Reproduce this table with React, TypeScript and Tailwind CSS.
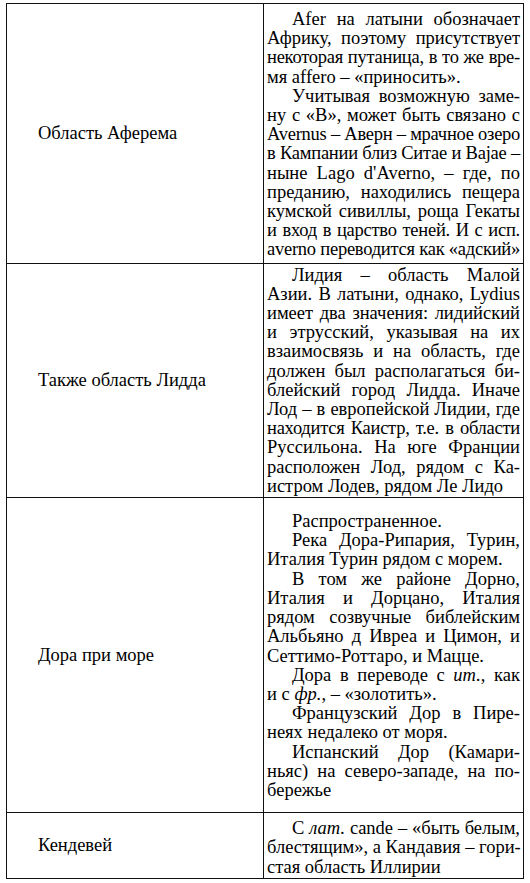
import React from "react";

type L = { t: React.ReactNode; j?: boolean; i?: boolean; n?: boolean };

const Line = ({ l }: { l: L }) => (
  <div
    className={
      "whitespace-nowrap " +
      (l.j ? "text-justify [text-align-last:justify] " : "text-left ") +
      (l.i ? "pl-[25px] " : "") +
      (l.n ? "tracking-[-0.25px]" : "")
    }
  >
    {l.t}
  </div>
);

const row1: L[] = [
  { t: "Afer на латыни обозначает", j: true, i: true },
  { t: "Африку, поэтому присутствует", j: true },
  { t: "некоторая путаница, в то же вре-", j: true, n: true },
  { t: "мя affero – «приносить»." },
  { t: "Учитывая возможную заме-", j: true, i: true },
  { t: "ну с «В», может быть связано с", j: true },
  { t: "Avernus – Аверн – мрачное озеро", j: true, n: true },
  { t: "в Кампании близ Ситае и Bajae –", j: true, n: true },
  { t: "ныне Lago d'Averno, – где, по", j: true },
  { t: "преданию, находились пещера", j: true },
  { t: "кумской сивиллы, роща Гекаты", j: true },
  { t: "и вход в царство теней. И с исп.", j: true, n: true },
  { t: "averno переводится как «адский»", j: true, n: true },
];

const row2: L[] = [
  { t: "Лидия – область Малой", j: true, i: true },
  { t: "Азии. В латыни, однако, Lydius", j: true },
  { t: "имеет два значения: лидийский", j: true },
  { t: "и этрусский, указывая на их", j: true },
  { t: "взаимосвязь и на область, где", j: true },
  { t: "должен был располагаться би-", j: true },
  { t: "блейский город Лидда. Иначе", j: true },
  { t: "Лод – в европейской Лидии, где", j: true },
  { t: "находится Каистр, т.е. в области", j: true, n: true },
  { t: "Руссильона. На юге Франции", j: true },
  { t: "расположен Лод, рядом с Ка-", j: true },
  { t: "истром Лодев, рядом Ле Лидо" },
];

const row3: L[] = [
  { t: "Распространенное.", i: true },
  { t: "Река Дора-Рипария, Турин,", j: true, i: true },
  { t: "Италия Турин рядом с морем." },
  { t: "В том же районе Дорно,", j: true, i: true },
  { t: "Италия и Дорцано, Италия", j: true },
  { t: "рядом созвучные библейским", j: true },
  { t: "Альбьяно д Ивреа и Цимон, и", j: true },
  { t: "Сеттимо-Роттаро, и Маццe." },
  {
    t: (
      <>
        Дора в переводе с <i>ит.</i>, как
      </>
    ),
    j: true,
    i: true,
  },
  {
    t: (
      <>
        и с <i>фр.</i>, – «золотить».
      </>
    ),
  },
  { t: "Французский Дор в Пире-", j: true, i: true },
  { t: "неях недалеко от моря." },
  { t: "Испанский Дор (Камари-", j: true, i: true },
  { t: "ньяс) на северо-западе, на по-", j: true },
  { t: "бережье" },
];

const row4: L[] = [
  {
    t: (
      <>
        С <i>лат.</i> cande – «быть белым,
      </>
    ),
    j: true,
    i: true,
  },
  { t: "блестящим», а Кандавия – гори-", j: true },
  { t: "стая область Иллирии" },
];

const rows: { label: string; lines: L[]; pad: string }[] = [
  { label: "Область Аферема", lines: row1, pad: "pt-[6px] pb-[3px]" },
  { label: "Также область Лидда", lines: row2, pad: "pt-[2px] pb-[1px]" },
  { label: "Дора при море", lines: row3, pad: "pt-[14px] pb-[12px]" },
  { label: "Кендевей", lines: row4, pad: "pt-[6px] pb-[1px]" },
];

export default function App() {
  return (
    <div className="bg-white w-[530px] h-[883px] pt-[3px] pl-[6px] [font-family:'Liberation_Serif',serif] text-[18.5px] leading-[19.2px] text-black">
      <table className="border-collapse w-[517px] table-fixed">
        <colgroup>
          <col className="w-[257px]" />
          <col className="w-[260px]" />
        </colgroup>
        <tbody>
          {rows.map((r, k) => (
            <tr key={k}>
              <td className="border border-[#111] align-middle pl-[31px] p-0">
                {r.label}
              </td>
              <td className={"border border-[#111] align-top pl-[3px] pr-[3px] " + r.pad}>
                {r.lines.map((l, n) => (
                  <Line key={n} l={l} />
                ))}
              </td>
            </tr>
          ))}
        </tbody>
      </table>
    </div>
  );
}
